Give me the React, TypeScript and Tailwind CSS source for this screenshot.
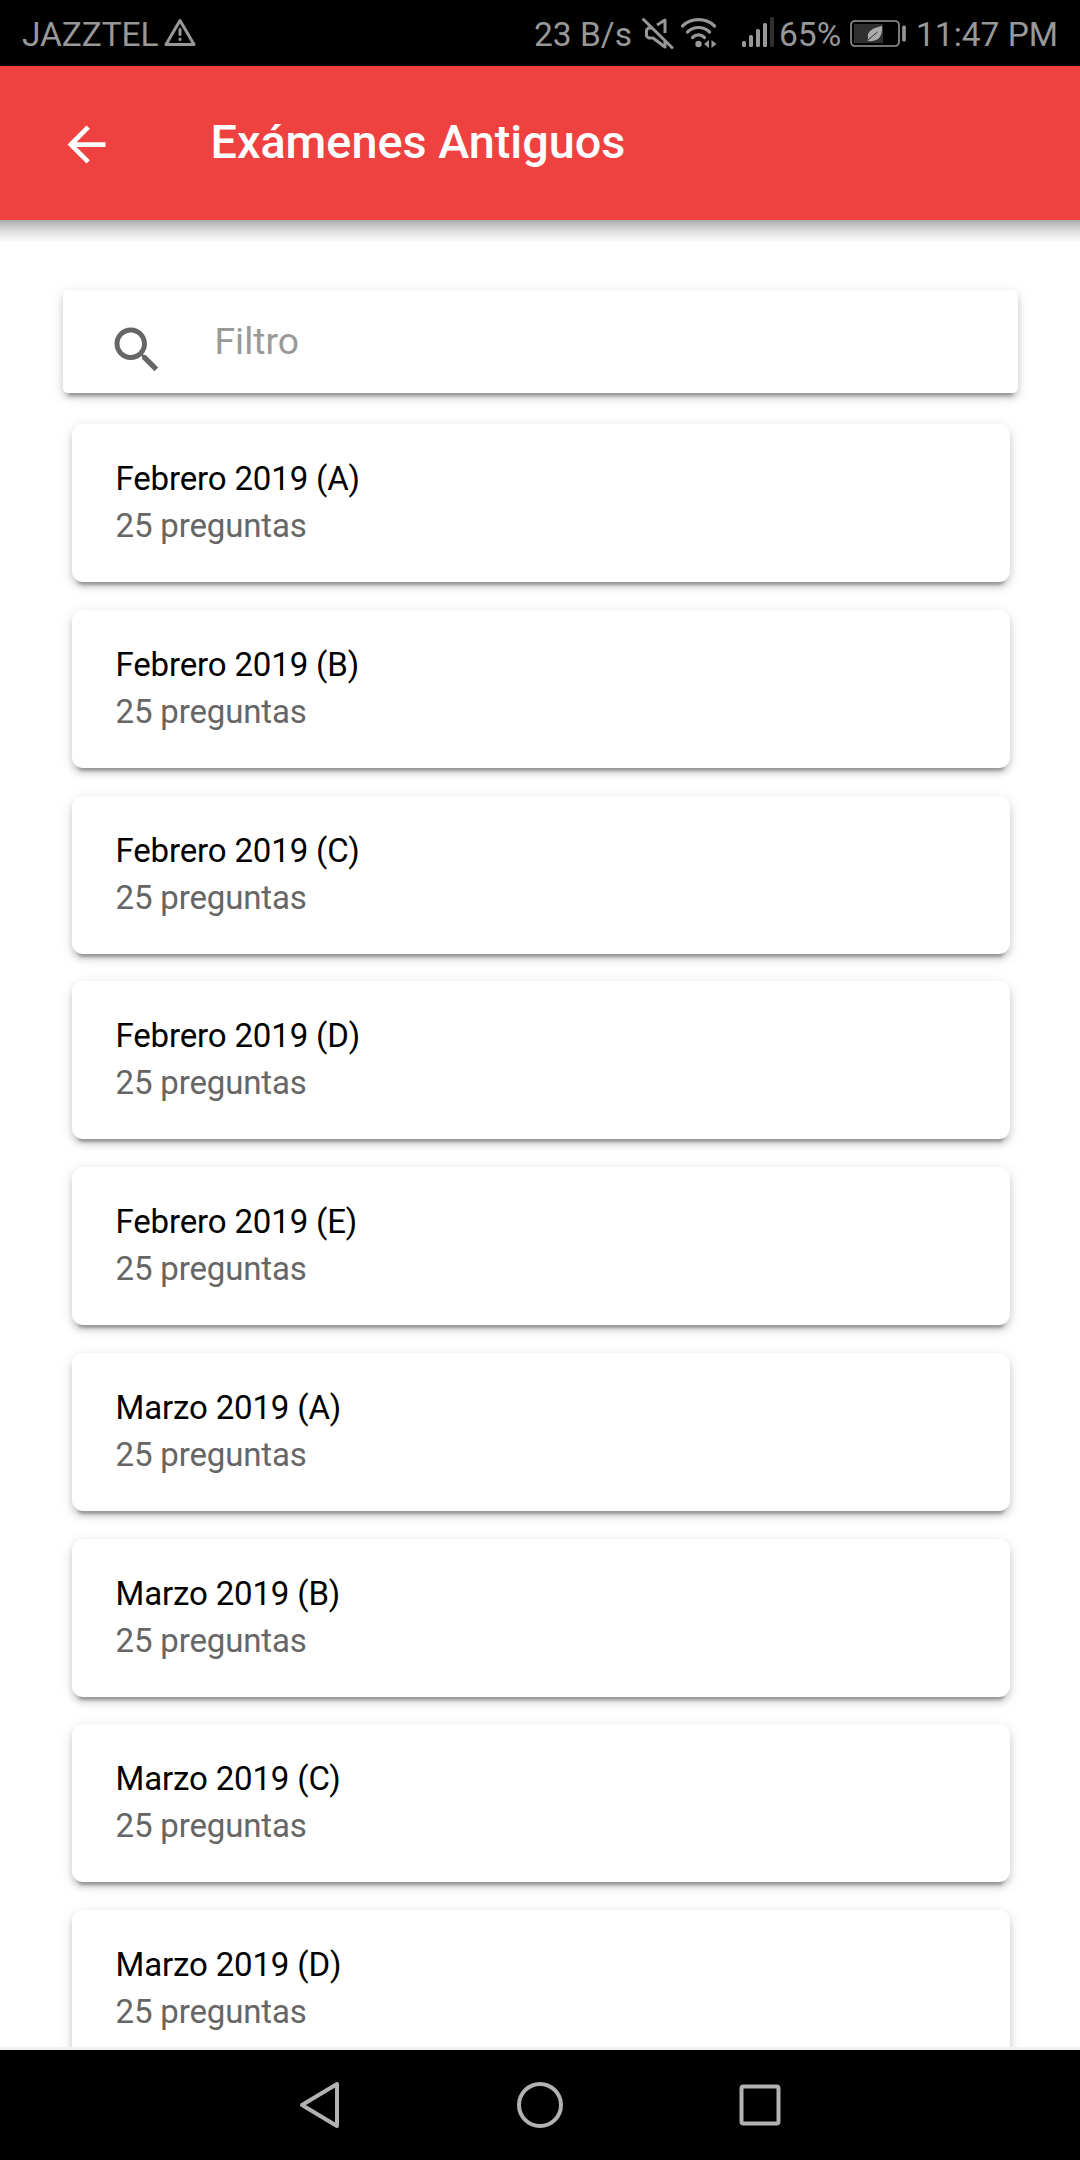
const exams = [
  "Febrero 2019 (A)",
  "Febrero 2019 (B)",
  "Febrero 2019 (C)",
  "Febrero 2019 (D)",
  "Febrero 2019 (E)",
  "Marzo 2019 (A)",
  "Marzo 2019 (B)",
  "Marzo 2019 (C)",
  "Marzo 2019 (D)",
];

function StatusBar() {
  return (
    <div className="flex h-[66px] shrink-0 items-center bg-black pl-[22px] text-[33.500px] leading-[66px] text-[#989898]">
      <span className="w-[136px] whitespace-nowrap pt-[3px] tracking-[-0.100px]">JAZZTEL</span>
      <svg className="mb-[2px] ml-[5px] h-[30px] w-[34px]" viewBox="0 0 34 30" fill="none" stroke="currentColor">
        <path d="M17 3.500 31 27.500H3Z" strokeWidth="3" strokeLinejoin="round" />
        <path d="M17 12.500v5M17 22v.500" strokeWidth="3" strokeLinecap="round" />
      </svg>
      <span className="ml-[337px] w-[107px] whitespace-nowrap pt-[3px]">23 B/s</span>
      <svg className="h-[34px] w-[33px]" viewBox="0 0 33 34" fill="none" stroke="currentColor" strokeWidth="3" strokeLinejoin="round">
        <path d="M16 9 24 4V17M12 12H7.500L5.500 14V20L7.500 22H12L24 31V25" />
        <path d="M2.500 3.500 31 31.500" strokeLinecap="round" />
      </svg>
      <svg className="mb-[2px] ml-[6px] h-[32px] w-[38px]" viewBox="0 0 38 32" fill="none" stroke="currentColor" strokeWidth="3.200" strokeLinecap="round">
        <path d="M2.500 10C11 1.500 26 1.500 34.500 10M7.500 16C13.500 10 23.500 10 29.500 16M12.500 21.500C16 18 21 18 24.500 21.500" />
        <circle cx="18.500" cy="28" r="3.200" fill="currentColor" stroke="none" />
        <path d="M29 24v8l-5-4ZM31.500 24v8l5-4Z" fill="currentColor" stroke="none" />
      </svg>
      <svg className="mb-[2px] ml-[24px] h-[32px] w-[32px]" viewBox="0 0 32 32" fill="currentColor">
        <rect x="0" y="25" width="4" height="6" rx="1.500" />
        <rect x="7" y="19" width="4" height="12" rx="1.500" />
        <rect x="14" y="13" width="4" height="18" rx="1.500" />
        <rect x="21" y="7" width="4" height="24" rx="1.500" />
        <rect x="28" y="1" width="4" height="30" rx="1.500" fill="#303030" />
      </svg>
      <span className="ml-[5px] w-[71px] whitespace-nowrap pt-[3px]">65%</span>
      <svg className="mt-[2px] h-[28px] w-[57px]" viewBox="0 0 57 28" fill="none">
        <rect x="1" y="1" width="48" height="25" rx="4" stroke="currentColor" strokeWidth="1.600" />
        <rect x="4" y="4" width="29" height="19" fill="#303030" />
        <path d="M32 6C23 8 16.500 11 18 18L17.500 21C27 22 33 18 32 6Z" fill="#aaa" />
        <path d="M18 20 27.500 12" stroke="#303030" strokeWidth="1" />
        <rect x="52.200" y="5.500" width="3.600" height="16" rx="1.500" fill="currentColor" />
      </svg>
      <span className="ml-[9px] whitespace-nowrap pt-[3px]">11:47 PM</span>
    </div>
  );
}

function Header() {
  return (
    <header className="flex h-[154px] shrink-0 items-center bg-[#f04141] pl-[57.500px] text-white">
      <svg className="mt-[2px] h-[57px] w-[57px]" viewBox="0 0 24 24" fill="currentColor">
        <path d="M20 11H7.830l5.590-5.590L12 4l-8 8 8 8 1.410-1.410L7.830 13H20v-2z" />
      </svg>
      <h1 className="-mt-[2px] ml-[96px] whitespace-nowrap text-[46.750px] font-medium leading-[56px]">Exámenes Antiguos</h1>
    </header>
  );
}

function SearchBox() {
  return (
    <div className="ml-[63px] flex h-[103px] w-[955px] shrink-0 items-center rounded-[5px] bg-white pl-[44px] shadow-[0_8px_3px_-5px_rgba(0,0,0,0.26),0_5px_6px_rgba(0,0,0,0.14),0_3px_14px_rgba(0,0,0,0.12)]">
      <svg className="mt-[17px] h-[60px] w-[60px] text-[#666]" viewBox="0 0 24 24" fill="currentColor">
        <path d="M15.500 14h-.790l-.280-.270C15.410 12.590 16 11.110 16 9.500 16 5.910 13.090 3 9.500 3S3 5.910 3 9.500 5.910 16 9.500 16c1.610 0 3.090-.590 4.230-1.570l.270.280v.790l5 4.990L20.490 19l-4.990-5zm-6 0C7.010 14 5 11.990 5 9.500S7.010 5 9.500 5 14 7.010 14 9.500 11.990 14 9.500 14z" />
      </svg>
      <span className="-mt-[2px] ml-[47.500px] text-[37.300px] leading-[44px] text-[#999]">Filtro</span>
    </div>
  );
}

function ExamCard({ title }: { title: string }) {
  return (
    <div className="ml-[72px] h-[158px] w-[938px] shrink-0 rounded-[11px] bg-white pl-[43.500px] pt-[31px] tracking-[-0.150px] shadow-[0_8px_3px_-5px_rgba(0,0,0,0.26),0_5px_6px_rgba(0,0,0,0.14),0_3px_14px_rgba(0,0,0,0.12)]">
      <h2 className="whitespace-nowrap text-[33px] leading-[47px] text-black">{title}</h2>
      <p className="whitespace-nowrap text-[33px] leading-[47px] text-[#666]">25 preguntas</p>
    </div>
  );
}

function NavBar() {
  return (
    <nav className="flex h-[110px] shrink-0 items-center bg-black pl-[298px] text-[#b2b2b2]">
      <svg className="h-[50px] w-[44px]" viewBox="0 0 44 50" fill="none" stroke="currentColor" strokeWidth="4" strokeLinejoin="round">
        <path d="M39 4V46L4 25Z" />
      </svg>
      <svg className="ml-[173px] h-[50px] w-[50px]" viewBox="0 0 50 50" fill="none" stroke="currentColor" strokeWidth="4">
        <circle cx="25" cy="25" r="21" />
      </svg>
      <svg className="ml-[170px] h-[50px] w-[50px]" viewBox="0 0 50 50" fill="none" stroke="currentColor" strokeWidth="4">
        <rect x="6.500" y="6.500" width="37" height="37" rx="2" />
      </svg>
    </nav>
  );
}

export default function App() {
  return (
    <div className="flex h-[2160px] w-[1080px] flex-col overflow-hidden bg-white font-['Roboto','Noto_Sans',sans-serif]">
      <StatusBar />
      <Header />
      <main className="flex h-[1830px] shrink-0 flex-col overflow-hidden border-b-[3px] border-[#f2f2f2]">
        <div className="mb-[48px] h-[22px] shrink-0 bg-linear-to-b from-[#acacac] via-[#dedede] to-[#fcfcfc]" />
        <SearchBox />
        <div className="mt-[31px] flex flex-col gap-[27.750px]">
          {exams.map((title) => (
            <ExamCard key={title} title={title} />
          ))}
        </div>
      </main>
      <NavBar />
    </div>
  );
}
